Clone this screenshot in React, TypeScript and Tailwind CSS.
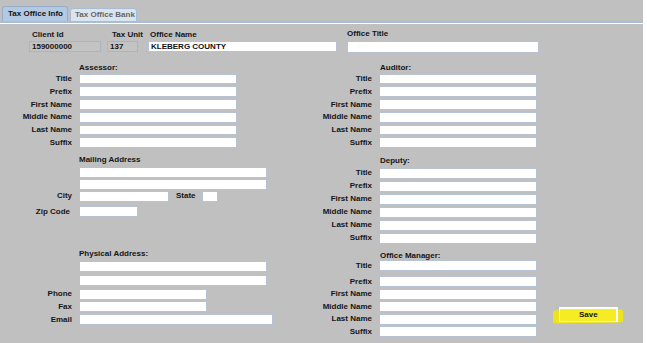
import React from 'react'

type RowDef = { label: string; mt: string; h: string; w: string }

const assessorRows: RowDef[] = [
  { label: 'Title', mt: 'mt-[1.3px]', h: 'h-[10.7px]', w: 'w-[158px]' },
  { label: 'Prefix', mt: 'mt-[2px]', h: 'h-[10.7px]', w: 'w-[158px]' },
  { label: 'First Name', mt: 'mt-[2px]', h: 'h-[10.7px]', w: 'w-[158px]' },
  { label: 'Middle Name', mt: 'mt-[2px]', h: 'h-[10.7px]', w: 'w-[158px]' },
  { label: 'Last Name', mt: 'mt-[2px]', h: 'h-[10.7px]', w: 'w-[158px]' },
  { label: 'Suffix', mt: 'mt-[2px]', h: 'h-[10.7px]', w: 'w-[158px]' },
]

const deputyRows: RowDef[] = [
  { label: 'Title', mt: 'mt-[1.8px]', h: 'h-[11px]', w: 'w-[158px]' },
  { label: 'Prefix', mt: 'mt-[2px]', h: 'h-[11px]', w: 'w-[158px]' },
  { label: 'First Name', mt: 'mt-[2px]', h: 'h-[11px]', w: 'w-[158px]' },
  { label: 'Middle Name', mt: 'mt-[2px]', h: 'h-[11px]', w: 'w-[158px]' },
  { label: 'Last Name', mt: 'mt-[2px]', h: 'h-[11px]', w: 'w-[158px]' },
  { label: 'Suffix', mt: 'mt-[2px]', h: 'h-[11px]', w: 'w-[158px]' },
]

const managerRows: RowDef[] = [
  { label: 'Title', mt: 'mt-[0.5px]', h: 'h-[11px]', w: 'w-[158px]' },
  { label: 'Prefix', mt: 'mt-[4.7px]', h: 'h-[11px]', w: 'w-[158px]' },
  { label: 'First Name', mt: 'mt-[1.6px]', h: 'h-[11px]', w: 'w-[158px]' },
  { label: 'Middle Name', mt: 'mt-[1.7px]', h: 'h-[11px]', w: 'w-[158px]' },
  { label: 'Last Name', mt: 'mt-[1.3px]', h: 'h-[11px]', w: 'w-[158px]' },
  { label: 'Suffix', mt: 'mt-[1.7px]', h: 'h-[11px]', w: 'w-[158px]' },
]

const Box = ({ className = '' }: { className?: string }) => (
  <input readOnly className={`block bg-white border border-[#b7c3d2] outline-none ${className}`} />
)

const Heading = ({ text, className }: { text: string; className: string }) => (
  <div className={`h-[10px] leading-[10px] text-[8px] font-bold text-[#151515] ${className}`}>{text}</div>
)

// left column: labels end at 72, inputs at 79
const LeftRow = ({ label, mt, h, w }: RowDef) => (
  <div className={`flex items-center ${mt}`}>
    <span className="w-[72px] text-right leading-[10px] text-[8px] font-bold text-[#151515]">{label}</span>
    <Box className={`ml-[7px] ${w} ${h}`} />
  </div>
)

// right column: labels end at 372, inputs at 378
const RightRow = ({ label, mt, h, w }: RowDef) => (
  <div className={`flex items-center ${mt}`}>
    <span className="w-[72px] text-right leading-[10px] text-[8px] font-bold text-[#151515]">{label}</span>
    <Box className={`ml-[6.5px] ${w} ${h}`} />
  </div>
)

export default function App() {
  return (
    <div className="w-[647px] h-[343px] bg-white font-['Liberation_Sans',Arial,sans-serif]">
      <div className="w-[643px] h-[343px] bg-[#c0c0c0] flex flex-col">
        {/* Tabs */}
        <div className="h-[24px] flex flex-col">
          <div className="flex items-end h-[21px] pl-[2px] gap-[2px]">
            <div className="h-[15px] w-[66px] bg-[#b3c9e1] border border-b-0 border-[#97aecb] rounded-t-[3px] flex items-center pl-[5px] text-[8px] font-bold text-[#151515] whitespace-nowrap">
              Tax Office Info
            </div>
            <div className="h-[13px] w-[67px] bg-[#d9e4ef] border border-b-0 border-[#a9bcd3] rounded-t-[3px] flex items-center pl-[4px] text-[8px] font-bold text-[#666] whitespace-nowrap overflow-hidden">
              Tax Office Bank
            </div>
          </div>
          <div className="h-[2px] bg-[#a8bdd6]" />
          <div className="h-[1px] bg-white" />
        </div>

        {/* Top row */}
        <div className="flex pl-[29px]">
          <div className="w-[72px]">
            <div className="mt-[6px] h-[10px] leading-[10px] pl-[3px] text-[8px] font-bold text-[#151515]">Client Id</div>
            <input readOnly value="159000000" className="block mt-[1px] w-[72px] h-[11px] bg-[#c3c3c3] border border-[#a9b5c4] outline-none pl-[2px] text-[8px] font-bold text-[#151515]" />
          </div>
          <div className="w-[31px] ml-[6px]">
            <div className="mt-[6px] h-[10px] leading-[10px] pl-[5px] text-[8px] font-bold text-[#151515] whitespace-nowrap">Tax Unit</div>
            <input readOnly value="137" className="block mt-[1px] w-[31px] h-[11px] bg-[#c3c3c3] border border-[#a9b5c4] outline-none pl-[2px] text-[8px] font-bold text-[#151515]" />
          </div>
          <div className="w-[189px] ml-[10px]">
            <div className="mt-[6px] h-[10px] leading-[10px] pl-[2px] text-[8px] font-bold text-[#151515]">Office Name</div>
            <input readOnly value="KLEBERG COUNTY" className="block mt-[1px] w-[189px] h-[11px] bg-white border border-[#b7c3d2] outline-none pl-[2px] text-[8px] font-bold text-[#111]" />
          </div>
          <div className="w-[192px] ml-[10px]">
            <div className="mt-[5px] h-[10px] leading-[10px] text-[8px] font-bold text-[#151515]">Office Title</div>
            <Box className="mt-[2px] w-[192px] h-[11.5px]" />
          </div>
        </div>

        {/* Body */}
        <div className="flex">
          {/* Left column */}
          <div className="w-[300px] flex flex-col">
            <Heading text="Assessor:" className="mt-[10px] pl-[79px]" />
            {assessorRows.map(r => <LeftRow key={r.label} {...r} />)}

            <Heading text="Mailing Address" className="mt-[7px] pl-[79px]" />
            <div className="flex mt-[2.2px]">
              <Box className="ml-[79px] w-[188px] h-[10.5px]" />
            </div>
            <div className="flex mt-[1.5px]">
              <Box className="ml-[79px] w-[188px] h-[10.5px]" />
            </div>
            <div className="flex items-center mt-[1.5px]">
              <span className="w-[72px] text-right leading-[10px] text-[8px] font-bold text-[#151515]">City</span>
              <Box className="ml-[7px] w-[90px] h-[10.5px]" />
              <span className="ml-[7px] leading-[10px] text-[8px] font-bold text-[#151515]">State</span>
              <Box className="ml-[6px] w-[16px] h-[10.5px]" />
            </div>
            <div className="flex items-center mt-[4.5px]">
              <span className="w-[70px] text-right leading-[10px] text-[8px] font-bold text-[#151515]">Zip Code</span>
              <Box className="ml-[9px] w-[59px] h-[11px]" />
            </div>

            <Heading text="Physical Address:" className="mt-[32.3px] pl-[79px]" />
            <div className="flex mt-[1.7px]">
              <Box className="ml-[79px] w-[188px] h-[11px]" />
            </div>
            <div className="flex mt-[3.3px]">
              <Box className="ml-[79px] w-[188px] h-[11px]" />
            </div>
            <LeftRow label="Phone" mt="mt-[2.3px]" h="h-[11px]" w="w-[128px]" />
            <LeftRow label="Fax" mt="mt-[1.7px]" h="h-[11px]" w="w-[128px]" />
            <LeftRow label="Email" mt="mt-[2px]" h="h-[11px]" w="w-[194px]" />
          </div>

          {/* Right column */}
          <div className="w-[237px] flex flex-col">
            <Heading text="Auditor:" className="mt-[10px] pl-[80px]" />
            {assessorRows.map(r => <RightRow key={r.label} {...r} />)}

            <Heading text="Deputy:" className="mt-[8px] pl-[80px]" />
            {deputyRows.map(r => <RightRow key={r.label} {...r} />)}

            <div className="mt-[8.2px] h-[8px] leading-[8px] pl-[80px] text-[8px] font-bold text-[#151515]">Office Manager:</div>
            {managerRows.map(r => <RightRow key={r.label} {...r} />)}
          </div>

          {/* Save */}
          <div className="ml-[22.3px] mt-[254.7px]">
            <div className="relative w-[59px] h-[15px]">
              <div className="absolute left-[-6px] top-[3px] w-[70px] h-[13px] bg-[#eee21c] rounded-[2px] -rotate-1" />
              <button className="relative block w-[59px] h-[15px] leading-[12px] bg-[#f6ec24] border-t-[2px] border-r-[2px] border-b border-l border-white text-[8px] font-bold text-[#151515]">
                Save
              </button>
            </div>
          </div>
        </div>
      </div>
    </div>
  )
}
